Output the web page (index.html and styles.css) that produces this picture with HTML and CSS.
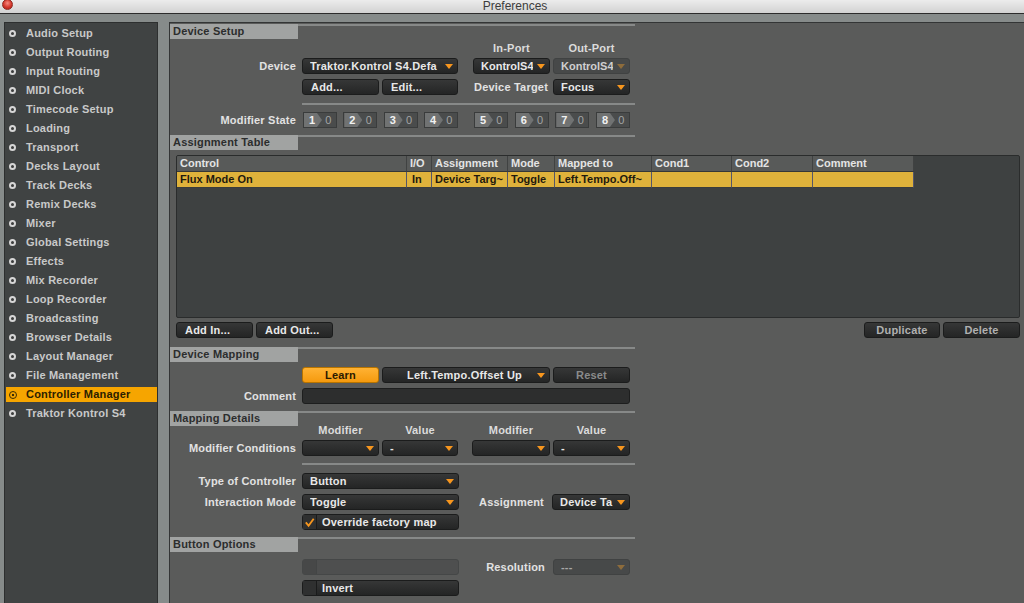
FILE: index.html
```html
<!DOCTYPE html>
<html>
<head>
<meta charset="utf-8">
<title>Preferences</title>
<link rel="stylesheet" href="styles.css">
</head>
<body>
<div class="titlebar">
  <div class="tb-left"><span class="close"></span></div>
  <div class="title">Preferences</div>
  <div></div>
</div>
<div class="window">
  <nav class="sidebar">
    <ul class="nav">
      <li><span class="dot"></span>Audio Setup</li>
      <li><span class="dot"></span>Output Routing</li>
      <li><span class="dot"></span>Input Routing</li>
      <li><span class="dot"></span>MIDI Clock</li>
      <li><span class="dot"></span>Timecode Setup</li>
      <li><span class="dot"></span>Loading</li>
      <li><span class="dot"></span>Transport</li>
      <li><span class="dot"></span>Decks Layout</li>
      <li><span class="dot"></span>Track Decks</li>
      <li><span class="dot"></span>Remix Decks</li>
      <li><span class="dot"></span>Mixer</li>
      <li><span class="dot"></span>Global Settings</li>
      <li><span class="dot"></span>Effects</li>
      <li><span class="dot"></span>Mix Recorder</li>
      <li><span class="dot"></span>Loop Recorder</li>
      <li><span class="dot"></span>Broadcasting</li>
      <li><span class="dot"></span>Browser Details</li>
      <li><span class="dot"></span>Layout Manager</li>
      <li><span class="dot"></span>File Management</li>
      <li class="active"><span class="dot"></span>Controller Manager</li>
      <li><span class="dot"></span>Traktor Kontrol S4</li>
    </ul>
  </nav>

  <main class="panel">
    <!-- Device Setup -->
    <div class="sec-head"><div class="sec-title">Device Setup</div><div class="sec-line"></div></div>
    <div class="row caps caps-ports"><span class="cap w77">In-Port</span><span class="cap w77 ml3">Out-Port</span></div>
    <div class="row mt3">
      <span class="lbl">Device</span>
      <div class="dd w156"><span class="t">Traktor.Kontrol S4.Defa</span><i class="arr"></i></div>
      <div class="dd w77 ml15 tight"><span class="t">KontrolS4</span><i class="arr"></i></div>
      <div class="dd w77 ml3 off tight"><span class="t">KontrolS4</span><i class="arr"></i></div>
    </div>
    <div class="row mt5">
      <span class="lbl"></span>
      <div class="btn w77">Add...</div>
      <div class="btn w76 ml3">Edit...</div>
      <span class="lbl-inline w77 ml15">Device Target</span>
      <div class="dd w77 ml3"><span class="t">Focus</span><i class="arr"></i></div>
    </div>
    <div class="sep mt8"></div>
    <div class="row mt7">
      <span class="lbl">Modifier State</span>
      <div class="mods w156">
        <div class="mod"><span class="k">1</span><span class="v">0</span></div>
        <div class="mod"><span class="k">2</span><span class="v">0</span></div>
        <div class="mod"><span class="k">3</span><span class="v">0</span></div>
        <div class="mod"><span class="k">4</span><span class="v">0</span></div>
      </div>
      <div class="mods w157 ml15">
        <div class="mod"><span class="k">5</span><span class="v">0</span></div>
        <div class="mod"><span class="k">6</span><span class="v">0</span></div>
        <div class="mod"><span class="k">7</span><span class="v">0</span></div>
        <div class="mod"><span class="k">8</span><span class="v">0</span></div>
      </div>
    </div>

    <!-- Assignment Table -->
    <div class="sec-head mt7"><div class="sec-title">Assignment Table</div><div class="sec-line"></div></div>
    <div class="table">
      <div class="grid thead">
        <span>Control</span><span>I/O</span><span>Assignment</span><span>Mode</span><span>Mapped to</span><span>Cond1</span><span>Cond2</span><span>Comment</span>
      </div>
      <div class="grid trow sel">
        <span>Flux Mode On</span><span>In</span><span>Device Targ~</span><span>Toggle</span><span>Left.Tempo.Off~</span><span></span><span></span><span></span>
      </div>
    </div>
    <div class="row btnrow">
      <div class="btn w77">Add In...</div>
      <div class="btn w77 ml3">Add Out...</div>
      <div class="btn w76 push center dim">Duplicate</div>
      <div class="btn w77 ml3 center dim">Delete</div>
    </div>

    <!-- Device Mapping -->
    <div class="sec-head mt9"><div class="sec-title">Device Mapping</div><div class="sec-line"></div></div>
    <div class="row mt5">
      <span class="lbl"></span>
      <div class="learn w77">Learn</div>
      <div class="dd w168 ml3 centered"><span class="t">Left.Tempo.Offset Up</span><i class="arr"></i></div>
      <div class="btn w77 ml3 center dimmer">Reset</div>
    </div>
    <div class="row mt5">
      <span class="lbl">Comment</span>
      <div class="input w328"></div>
    </div>

    <!-- Mapping Details -->
    <div class="sec-head mt7"><div class="sec-title">Mapping Details</div><div class="sec-line"></div></div>
    <div class="row caps caps-mod">
      <span class="cap w77">Modifier</span><span class="cap w76 ml3">Value</span>
      <span class="cap w78 ml14">Modifier</span><span class="cap w77 ml3">Value</span>
    </div>
    <div class="row mt4">
      <span class="lbl">Modifier Conditions</span>
      <div class="dd w77"><span class="t"></span><i class="arr"></i></div>
      <div class="dd w76 ml3"><span class="t">-</span><i class="arr"></i></div>
      <div class="dd w78 ml14"><span class="t"></span><i class="arr"></i></div>
      <div class="dd w77 ml3"><span class="t">-</span><i class="arr"></i></div>
    </div>
    <div class="sep mt7"></div>
    <div class="row mt8">
      <span class="lbl">Type of Controller</span>
      <div class="dd w157"><span class="t">Button</span><i class="arr"></i></div>
    </div>
    <div class="row mt5">
      <span class="lbl">Interaction Mode</span>
      <div class="dd w157"><span class="t">Toggle</span><i class="arr"></i></div>
      <span class="lbl-inline w93">Assignment</span>
      <div class="dd w78"><span class="t">Device Ta</span><i class="arr"></i></div>
    </div>
    <div class="row mt4">
      <span class="lbl"></span>
      <div class="chk w157">
        <span class="box"><svg width="14" height="14" viewBox="0 0 14 14"><polyline points="3,7.5 6,11 11.5,3.5" fill="none" stroke="#f7961e" stroke-width="2"/></svg></span>
        <span class="ct">Override factory map</span>
      </div>
    </div>

    <!-- Button Options -->
    <div class="sec-head mt7"><div class="sec-title">Button Options</div><div class="sec-line"></div></div>
    <div class="row mt7">
      <span class="lbl"></span>
      <div class="slider w157"><span class="box"></span></div>
      <span class="lbl-inline w94">Resolution</span>
      <div class="dd w77 off dimtxt"><span class="t">---</span><i class="arr"></i></div>
    </div>
    <div class="row mt5">
      <span class="lbl"></span>
      <div class="chk w157"><span class="box"></span><span class="ct">Invert</span></div>
    </div>
  </main>
</div>
</body>
</html>
```

FILE: styles.css
```css
* { box-sizing: border-box; }
html, body { margin: 0; padding: 0; }
body {
  width: 1024px;
  height: 603px;
  overflow: hidden;
  background: #868b8a;
  font-family: "Liberation Sans", Arial, sans-serif;
  font-size: 11px;
  font-weight: bold;
  letter-spacing: 0.2px;
  color: #e2e2e2;
}

/* title bar */
.titlebar {
  height: 14px;
  border-bottom: 1px solid #2c2c2c;
  background: linear-gradient(#ececec, #d2d2d2);
  display: grid;
  grid-template-columns: 1fr auto 1fr;
  overflow: hidden;
}
.tb-left { display: flex; }
.close {
  width: 11px;
  height: 11px;
  margin: -1px 0 0 2px;
  border-radius: 50%;
  background: radial-gradient(circle at 50% 35%, #f58a80, #d4372c 55%, #a51e15);
  border: 1px solid #8e2a22;
}
.title {
  font-weight: normal;
  font-size: 12px;
  line-height: 12px;
  letter-spacing: 0;
  color: #3c3c3c;
  padding-left: 6px;
}

/* window */
.window {
  display: flex;
  height: 589px;
  padding: 8px 0 0 4px;
  gap: 11px;
}

/* sidebar */
.sidebar {
  width: 154px;
  flex: none;
  background: #404343;
  border: 1px solid #2d2f2f;
  border-bottom: none;
}
.nav {
  list-style: none;
  margin: 0;
  padding: 3px 0 0 0;
}
.nav li {
  display: flex;
  align-items: center;
  height: 15px;
  line-height: 15px;
  margin: 0 0 4px 1px;
  color: #c8c9c9;
  white-space: nowrap;
}
.nav .dot {
  width: 7px;
  height: 7px;
  margin: 0 10px 0 3px;
  border-radius: 50%;
  border: 2px solid #d6d6d6;
  background: #3b3d3d;
  flex: none;
}
.nav li.active {
  background: #f6a500;
  color: #2b2100;
}
.nav li.active .dot {
  border: 1.5px solid #3a2c05;
  background: radial-gradient(circle, #3a2c05 0 1.2px, #f6a500 1.6px);
  width: 8px;
  height: 8px;
  margin: 0 9px 0 3px;
}

/* main panel */
.panel {
  flex: 1;
  background: #5a5b5a;
  border-top: 1px solid #333535;
  border-left: 1px solid #333535;
  padding-top: 1px;
}
.sec-head {
  display: flex;
  height: 15px;
}
.sec-title {
  width: 128px;
  height: 15px;
  line-height: 15px;
  background: #a1a3a2;
  color: #2c2d2d;
  padding-left: 3px;
}
.sec-line {
  width: 337px;
  height: 2px;
  background: #878988;
}
.sep {
  width: 333px;
  height: 2px;
  margin-left: 132px;
  background: #878988;
}

.row {
  display: flex;
  align-items: center;
  height: 16px;
}
.lbl {
  width: 132px;
  flex: none;
  padding-right: 6px;
  text-align: right;
  color: #e2e2e2;
  white-space: nowrap;
}
.lbl-inline {
  flex: none;
  text-align: right;
  color: #e2e2e2;
  white-space: nowrap;
}
.lbl-inline.w77 { padding-right: 2px; }

.caps { height: 12px; line-height: 12px; }
.caps-ports { margin-top: 2px; height: 14px; padding-left: 303px; }
.caps-mod { margin-top: -2px; padding-left: 132px; }
.cap { text-align: center; color: #dcdcdc; flex: none; }

/* widths and spacing */
.w76 { width: 76px; flex: none; }
.w77 { width: 77px; flex: none; }
.w78 { width: 78px; flex: none; }
.w93 { width: 93px; flex: none; padding-right: 8px; }
.w94 { width: 94px; flex: none; padding-right: 8px; }
.w156 { width: 156px; flex: none; }
.w157 { width: 157px; flex: none; }
.w168 { width: 168px; flex: none; }
.w328 { width: 328px; flex: none; }
.ml3 { margin-left: 3px; }
.ml14 { margin-left: 14px; }
.ml15 { margin-left: 15px; }
.mt3 { margin-top: 3px; }
.mt4 { margin-top: 4px; }
.mt5 { margin-top: 5px; }
.mt7 { margin-top: 7px; }
.mt8 { margin-top: 8px; }
.mt9 { margin-top: 9px; }

/* controls */
.dd, .btn, .input, .chk, .learn, .slider {
  height: 16px;
  border: 1px solid #1b1c1c;
  border-radius: 3px;
  line-height: 14px;
  white-space: nowrap;
}
.dd {
  display: flex;
  align-items: center;
  padding: 0 4px 0 7px;
  background: linear-gradient(#363737, #242525);
  color: #e8e8e8;
}
.dd .t {
  flex: 1;
  overflow: hidden;
  white-space: nowrap;
}
.dd.tight { letter-spacing: 0; }
.dd.centered .t { text-align: center; padding-left: 6px; }
.arr {
  flex: none;
  width: 0;
  height: 0;
  margin-left: 4px;
  border-left: 4px solid transparent;
  border-right: 4px solid transparent;
  border-top: 5px solid #f7961e;
}
.dd.off {
  background: #474949;
  border-color: #404242;
  color: #cfcfcf;
}
.dd.off .arr { border-top-color: #8d6c3c; }
.dd.dimtxt { color: #a8a8a8; }

.btn {
  padding-left: 8px;
  background: linear-gradient(#363737, #242525);
  color: #e8e8e8;
}
.btn.center { padding-left: 0; text-align: center; }
.btn.dim { color: #b0b0b0; }
.btn.dimmer { color: #8a8b8b; }
.push { margin-left: auto; }

.btnrow {
  margin-top: 4px;
  padding-left: 6px;
  padding-right: 4px;
}

.learn {
  text-align: center;
  background: linear-gradient(#ffb233, #f59a0e);
  border-color: #b87400;
  color: #2b1a00;
}
.input {
  background: #2d2e2e;
  border-color: #1d1e1e;
}

.chk {
  display: flex;
  align-items: center;
  background: linear-gradient(#363737, #242525);
  color: #e8e8e8;
}
.chk .box {
  width: 14px;
  height: 14px;
  flex: none;
  border-right: 1px solid #1a1b1b;
  background: #2f3030;
  display: flex;
}
.chk .ct { padding-left: 5px; }

.slider {
  display: flex;
  background: #4e4f4f;
  border-color: #454747;
}
.slider .box {
  width: 14px;
  height: 14px;
  border-right: 1px solid #434545;
  background: #474848;
}

/* modifier state */
.mods {
  display: flex;
  justify-content: space-between;
  padding-left: 1px;
}
.mod {
  width: 34px;
  height: 16px;
  display: flex;
  border: 1px solid #3a3c3c;
  background: #4a4c4c;
  line-height: 14px;
}
.mod .k {
  width: 18px;
  flex: none;
  padding-left: 5px;
  color: #f2f2f2;
  background: #707272;
  clip-path: polygon(0 0, 13px 0, 18px 50%, 13px 100%, 0 100%);
}
.mod .v {
  flex: 1;
  text-align: center;
  color: #a3a5a5;
  font-weight: normal;
  padding-right: 1px;
}

/* assignment table */
.table {
  margin: 5px 0 0 6px;
  width: 844px;
  height: 163px;
  border: 1px solid #2a2c2c;
  border-radius: 2px;
  background: #3e4141;
  overflow: hidden;
}
.grid {
  display: grid;
  grid-template-columns: 230px 25px 76px 47px 97px 80px 81px 101px;
  width: 737px;
  letter-spacing: 0;
}
.grid span {
  height: 16px;
  line-height: 15px;
  padding-left: 3px;
  white-space: nowrap;
  overflow: hidden;
}
.thead span {
  background: #585a59;
  color: #e4e4e4;
  border-right: 1px solid #404242;
  border-bottom: 1px solid #353737;
}
.sel span {
  background: #dfb23b;
  color: #1f1a0e;
  border-right: 1px solid #55566a;
  border-bottom: 1px solid #3a3c3c;
}
.sel span:nth-child(2) { padding-left: 5px; }
```
